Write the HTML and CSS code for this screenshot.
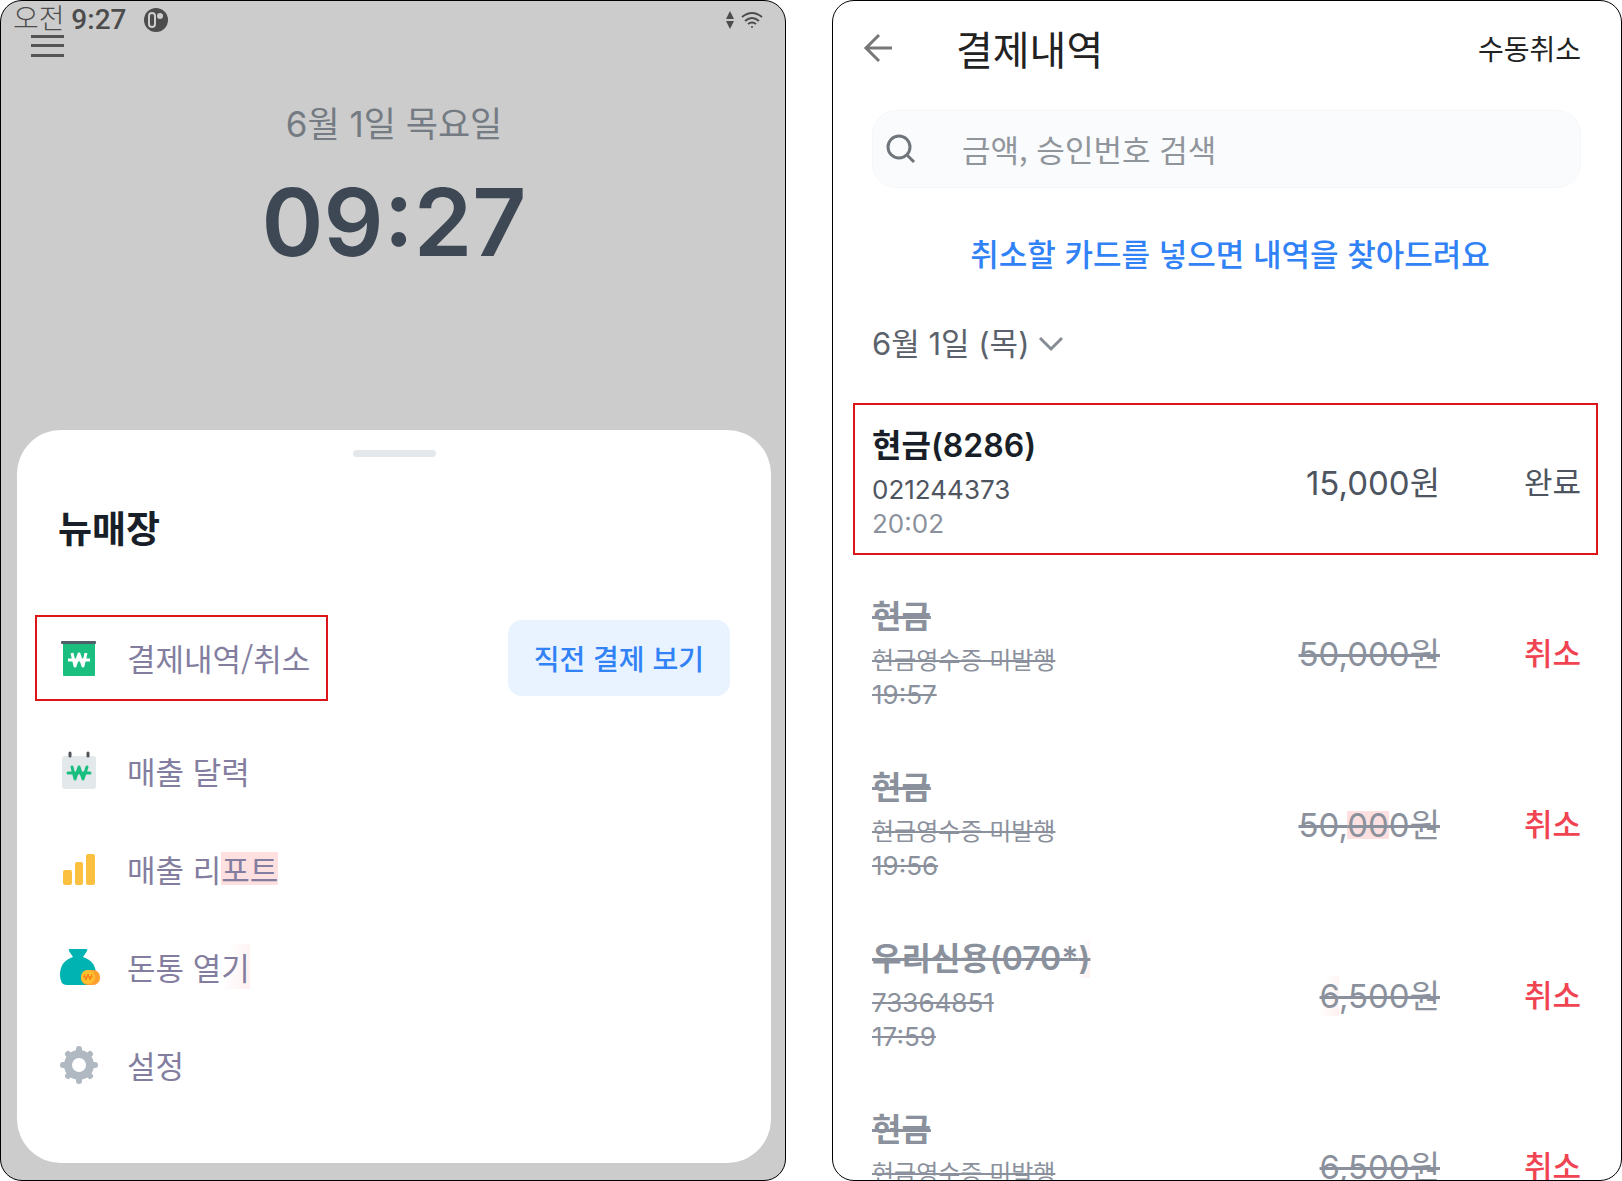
FILE: index.html
```
<!DOCTYPE html>
<html lang="ko">
<head>
    <meta charset="UTF-8">
    <meta name="viewport" content="width=device-width, initial-scale=1.0">
    <title>결제내역/취소</title>
    <link rel="stylesheet" href="styles.css">
</head>
<body>
    <main class="screens">
        <!-- Home screen with menu sheet -->
        <section class="screen home">
            <div class="status-bar">
                <span class="status-time">오전 <b>9:27</b></span>
                <svg class="status-app" width="24" height="24" viewBox="0 0 24 24">
                    <circle cx="12" cy="12" r="12" fill="#4c4c4c"/>
                    <rect x="5" y="5" width="6" height="14" rx="3" fill="#4c4c4c" stroke="#ccc" stroke-width="2"/>
                    <circle cx="16" cy="8" r="3" fill="#ccc"/>
                </svg>
                <svg class="status-data" width="8" height="18" viewBox="0 0 8 18" fill="#4c4c4c">
                    <path d="M4 0l4 8H0zM4 18l4-8H0z"/>
                </svg>
                <svg width="22" height="18" viewBox="0 0 22 18" fill="none" stroke="#4c4c4c" stroke-width="2">
                    <path d="M1 6Q11-2 21 6M4 10Q11 4 18 10M7 13Q11 10 15 13"/>
                    <circle cx="11" cy="16" r="1" fill="#4c4c4c" stroke="none"/>
                </svg>
            </div>
            <button class="menu-button" type="button" aria-label="메뉴">
                <svg width="33" height="24" viewBox="0 0 33 24" fill="#555">
                    <path d="M0 1h33v3H0zM0 10h33v3H0zM0 20h33v3H0z"/>
                </svg>
            </button>
            <div class="home-date">6월 1일 목요일</div>
            <div class="home-clock">09:27</div>

            <div class="sheet">
                <div class="handle"></div>
                <h2 class="store-name">뉴매장</h2>
                <div class="menu-first">
                    <a class="menu-link selected" href="#history">
                        <svg width="40" height="40" viewBox="0 0 40 40">
                            <rect x="4" y="4" width="32" height="34" rx="1" fill="#1abf80"/>
                            <rect x="2" y="3" width="35" height="3" rx="1" fill="#4e5f69"/>
                            <path d="M13 15l3 13 4-12 4 12 3-13M9 22h22" fill="none" stroke="#fff" stroke-width="3" stroke-linejoin="round"/>
                        </svg>
                        결제내역/취소
                    </a>
                    <button class="last-payment" type="button">직전 결제 보기</button>
                </div>
                <nav class="menu">
                    <a class="menu-link" href="#calendar">
                        <svg width="40" height="40" viewBox="0 0 40 40">
                            <rect x="3" y="5" width="34" height="33" rx="3" fill="#e3e8ea"/>
                            <path d="M11 2v3M29 2v3" stroke="#4e5459" stroke-width="3" stroke-linecap="round"/>
                            <path d="M13 16l3 12 4-12 4 12 4-12M9 22h22" fill="none" stroke="#1abf80" stroke-width="3" stroke-linecap="round" stroke-linejoin="round"/>
                        </svg>
                        매출 달력
                    </a>
                    <a class="menu-link" href="#report">
                        <svg width="40" height="40" viewBox="0 0 40 40" fill="#fbc040">
                            <rect x="4" y="21" width="9" height="15" rx="2"/>
                            <rect x="16" y="13" width="8" height="23" rx="2"/>
                            <rect x="27" y="5" width="9" height="31" rx="2"/>
                        </svg>
                        <span>매출 리<span class="tint">포트</span></span>
                    </a>
                    <a class="menu-link" href="#drawer">
                        <svg width="40" height="40" viewBox="0 0 40 40">
                            <path d="M11 2h16q2 0 1 2l-4 6Q37 14 37 28q0 10-6 10H8q-7 0-7-10Q1 14 14 10l-4-6q-1-2 1-2z" fill="#00b3b3"/>
                            <rect x="22" y="23" width="19" height="15" rx="7" fill="#ff9f2e"/>
                            <circle cx="29" cy="30" r="7" fill="#ffc030"/>
                            <path d="M25 27l2 6 2-6 2 6 2-6M24 30h10" fill="none" stroke="#f87c17" stroke-width="1"/>
                        </svg>
                        <span>돈통 열<span class="tint-soft">기</span></span>
                    </a>
                    <a class="menu-link" href="#settings">
                        <svg width="40" height="40" viewBox="0 0 40 40">
                            <circle cx="20" cy="20" r="11" fill="none" stroke="#b0b8c1" stroke-width="8"/>
                            <g stroke="#b0b8c1" stroke-width="6" stroke-linecap="round">
                                <path d="M20 7V4M20 33v3M7 20H4M33 20h3M11 11L9 9M29 29l2 2M29 11l2-2M11 29l-2 2"/>
                            </g>
                        </svg>
                        설정
                    </a>
                </nav>
            </div>
        </section>

        <!-- Payment history -->
        <section class="screen history">
            <header class="history-header">
                <button class="back" type="button" aria-label="뒤로">
                    <svg width="32" height="32" viewBox="0 0 32 32" fill="none" stroke="#777" stroke-width="3">
                        <path d="M30 16H5M17 3L4 16l13 13"/>
                    </svg>
                </button>
                <h1>결제내역</h1>
                <a class="manual-cancel" href="#manual">수동취소</a>
            </header>

            <label class="search">
                <svg width="30" height="30" viewBox="0 0 30 30" fill="none" stroke="#6f757b" stroke-width="3">
                    <circle cx="13" cy="13" r="11"/>
                    <path d="M21 21l7 7"/>
                </svg>
                <input type="text" placeholder="금액, 승인번호 검색" aria-label="금액, 승인번호 검색">
            </label>

            <p class="notice">취소할 카드를 넣으면 내역을 찾아드려요</p>

            <button class="date-picker" type="button">
                6월 1일 (목)
                <svg width="24" height="14" viewBox="0 0 24 14" fill="none" stroke="#868c93" stroke-width="3">
                    <path d="M1 1l11 11L23 1"/>
                </svg>
            </button>

            <table class="payments">
                <tbody>
                    <tr class="payment done">
                        <td>
                            <div class="method">현금(8286)</div>
                            <div class="detail">021244373</div>
                            <div class="time">20:02</div>
                        </td>
                        <td class="amount">15,000원</td>
                        <td class="state">완료</td>
                    </tr>
                    <tr class="payment canceled">
                        <td>
                            <div class="method"><s>현금</s></div>
                            <div class="detail no-receipt"><s>현금영수증 미발행</s></div>
                            <div class="time"><s>19:57</s></div>
                        </td>
                        <td class="amount"><s>50,000원</s></td>
                        <td class="state">취소</td>
                    </tr>
                    <tr class="payment canceled">
                        <td>
                            <div class="method"><s>현금</s></div>
                            <div class="detail no-receipt"><s>현금영수증 미발행</s></div>
                            <div class="time"><s>19:56</s></div>
                        </td>
                        <td class="amount"><s>50,<span class="tint">00</span>0원</s></td>
                        <td class="state">취소</td>
                    </tr>
                    <tr class="payment canceled">
                        <td>
                            <div class="method"><s>우리신용(070*<span class="tint-soft">)</span></s></div>
                            <div class="detail"><s>73364851</s></div>
                            <div class="time"><s>17:59</s></div>
                        </td>
                        <td class="amount"><s><span class="tint-soft">6</span>,500원</s></td>
                        <td class="state">취소</td>
                    </tr>
                    <tr class="payment canceled">
                        <td>
                            <div class="method"><s>현금</s></div>
                            <div class="detail no-receipt"><s>현금영수증 미발행</s></div>
                        </td>
                        <td class="amount"><s>6,500원</s></td>
                        <td class="state">취소</td>
                    </tr>
                </tbody>
            </table>
        </section>
    </main>
</body>
</html>
```
FILE: styles.css
```
* {
    box-sizing: border-box;
}

body {
    margin: 0;
    background: #fff;
    font-family: "Noto Sans CJK KR", sans-serif;
    color: #191f28;
}

button,
input {
    border: 0;
    padding: 0;
    background: none;
    font: inherit;
    color: inherit;
}

a {
    color: inherit;
    text-decoration: none;
}

svg {
    display: block;
    flex: none;
    overflow: visible;
}

.screens {
    display: grid;
    grid-template-columns: 786fr 790fr;
    gap: 46px;
    height: 100vh;
}

.screen {
    display: flex;
    flex-direction: column;
    min-width: 0;
    min-height: 0;
    border: 1px solid #000;
    border-radius: 22px;
    overflow: hidden;
}

.screen > * {
    flex-shrink: 0;
}

/* Home */
.home {
    background: #ccc;
    padding: 0 14px 17px 16px;
}

.status-bar {
    display: flex;
    align-items: center;
    height: 33px;
    padding: 4px 8px 0 0;
    margin-left: -4px;
    color: #4c4c4c;
}

.status-time {
    font-family: Roboto, "Noto Sans CJK KR", sans-serif;
    font-size: 28px;
    line-height: 32px;
    font-weight: 300;
}

.status-time b {
    font-weight: 500;
}

.status-app {
    margin-left: 18px;
}

.status-data {
    margin-left: auto;
    margin-right: 7px;
}

.menu-button {
    align-self: flex-start;
    margin-left: 14px;
}

.home-date {
    margin-top: 41px;
    font-family: Inter, "Noto Sans CJK KR", sans-serif;
    font-size: 35px;
    line-height: 50px;
    font-weight: 400;
    text-align: center;
    color: #757b83;
}

.home-clock {
    margin-top: 19px;
    font-family: Inter, sans-serif;
    font-size: 94px;
    line-height: 108px;
    font-weight: 600;
    text-align: center;
    color: #3e4854;
}

.sheet {
    margin-top: auto;
    padding: 20px 18px 49px;
    border-radius: 44px;
    background: #fff;
}

.handle {
    width: 83px;
    height: 7px;
    margin: 0 auto;
    border-radius: 4px;
    background: #e5e8eb;
}

.store-name {
    margin: 46px 0 64px 23px;
    font-size: 37px;
    line-height: 48px;
    font-weight: 700;
}

.menu-first {
    display: flex;
    align-items: center;
    justify-content: space-between;
    margin: 0 23px 21px 0;
}

.menu-link {
    display: flex;
    align-items: center;
    gap: 28px;
    height: 98px;
    padding-left: 24px;
    font-size: 31px;
    line-height: 40px;
    color: #837e9f;
}

.selected {
    height: 86px;
    padding: 0 16px 0 22px;
    border: 2px solid #dc1616;
}

.last-payment {
    height: 76px;
    padding: 0 26px;
    border-radius: 14px;
    background: #e8f3ff;
    font-size: 28px;
    line-height: 36px;
    font-weight: 500;
    color: #3182f6;
}

/* Payment history */
.history {
    background: #fff;
}

.history-header {
    display: flex;
    align-items: center;
    height: 94px;
    padding: 0 40px 0 29px;
}

.history-header h1 {
    margin: 0 auto 0 62px;
    font-size: 40px;
    line-height: 48px;
    font-weight: 400;
    color: #222;
}

.manual-cancel {
    font-size: 28px;
    line-height: 36px;
    color: #222;
}

.search {
    display: flex;
    align-items: center;
    gap: 46px;
    height: 78px;
    margin: 15px 40px 0 39px;
    padding: 0 13px;
    border: 1px solid #f4f6f8;
    border-radius: 24px;
    background: #f9fbfc;
}

.search input {
    flex: 1;
    min-width: 0;
    font-size: 31px;
    line-height: 40px;
    outline: none;
}

.search input::placeholder {
    color: #90959b;
    opacity: 1;
}

.notice {
    margin: 45px 0 51px;
    padding-left: 6px;
    font-size: 31px;
    line-height: 40px;
    font-weight: 500;
    text-align: center;
    color: #3182f6;
}

.date-picker {
    display: flex;
    align-items: center;
    align-self: flex-start;
    gap: 10px;
    margin-left: 39px;
    font-family: Inter, "Noto Sans CJK KR", sans-serif;
    font-size: 31px;
    line-height: 40px;
    color: #5b626b;
}

.payments {
    margin: 20px 23px 0 20px;
    border-collapse: separate;
    border-spacing: 0 19px;
    font-family: Inter, "Noto Sans CJK KR", sans-serif;
    color: #8b919c;
}

.payments td {
    height: 152px;
    padding: 21px 0 14px;
    vertical-align: middle;
}

.payments td:first-child {
    padding-left: 19px;
    vertical-align: top;
}

.done {
    outline: 2px solid #dc1616;
    outline-offset: -2px;
}

.method {
    margin-bottom: 5px;
    font-size: 32px;
    line-height: 44px;
    font-weight: 600;
}

.detail,
.time {
    font-size: 26px;
    line-height: 34px;
}

.no-receipt {
    font-size: 24px;
}

.payments .amount {
    font-size: 33px;
    line-height: 40px;
    text-align: right;
    white-space: nowrap;
}

.payments .state {
    width: 158px;
    padding-right: 17px;
    font-size: 31px;
    line-height: 40px;
    text-align: right;
}

.done .method {
    color: #191f28;
}

.done .detail,
.done .amount,
.done .state {
    color: #4e5560;
}

.canceled .state {
    font-weight: 500;
    color: #f04452;
}

/* Pale red wash behind parts of the text */
.tint {
    background: linear-gradient(transparent 14%, #ffe0e0 14%, #ffe0e0 86%, transparent 86%);
}

.tint-soft {
    background: linear-gradient(100deg, transparent 20%, #fff0f0);
}
```
